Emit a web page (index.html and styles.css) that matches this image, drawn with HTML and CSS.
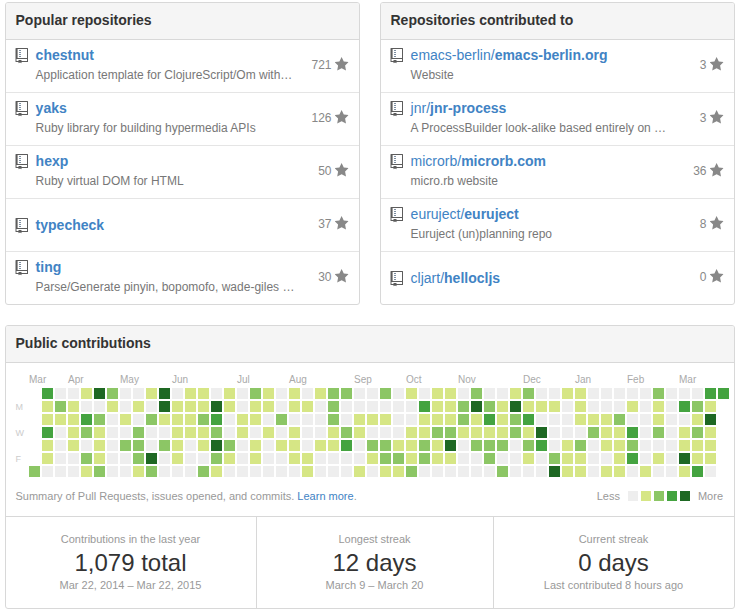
FILE: index.html
```html
<!DOCTYPE html>
<html lang="en">
<head>
<meta charset="utf-8">
<title>Contributions</title>
<link rel="stylesheet" href="styles.css">
</head>
<body>
<svg class="defs" width="0" height="0" aria-hidden="true">
  <symbol id="repo" viewBox="0 0 13 16">
    <path fill-rule="evenodd" d="M1 0h11.500q.5 0 .5.500v13q0 .5-.5.500H6.500v1.300L5 14.600 3.500 15.300V14H1q-.5 0-.5-.5V.5Q.5 0 1 0zM2.600 1v9H12V1zM1.500 11v2h2v-1h3v1H12v-2z"/>
    <path d="M4 2h2v1H4zM4 4h2v1H4zM4 6h2v1H4zM4 8h2v1H4z" class="ticks"/>
  </symbol>
  <symbol id="star" viewBox="0 0 14 14">
    <path d="M14 5.100l-4.800-.7L7 0 4.800 4.400 0 5.100l3.500 3.400L2.600 13.500 7 11.200l4.400 2.300-.9-5z"/>
  </symbol>
</svg>
<main class="page">
  <div class="columns">
    <section class="box">
      <h3 class="box-title">Popular repositories</h3>
      <ul class="repos">
        <li class="repo"><svg class="repo-icon"><use href="#repo"/></svg><div class="info"><a class="name"><b>chestnut</b></a><span class="desc">Application template for ClojureScript/Om with…</span></div><span class="stars">721 <svg class="star"><use href="#star"/></svg></span></li>
        <li class="repo"><svg class="repo-icon"><use href="#repo"/></svg><div class="info"><a class="name"><b>yaks</b></a><span class="desc">Ruby library for building hypermedia APIs</span></div><span class="stars">126 <svg class="star"><use href="#star"/></svg></span></li>
        <li class="repo"><svg class="repo-icon"><use href="#repo"/></svg><div class="info"><a class="name"><b>hexp</b></a><span class="desc">Ruby virtual DOM for HTML</span></div><span class="stars">50 <svg class="star"><use href="#star"/></svg></span></li>
        <li class="repo single"><svg class="repo-icon"><use href="#repo"/></svg><div class="info"><a class="name"><b>typecheck</b></a></div><span class="stars">37 <svg class="star"><use href="#star"/></svg></span></li>
        <li class="repo"><svg class="repo-icon"><use href="#repo"/></svg><div class="info"><a class="name"><b>ting</b></a><span class="desc">Parse/Generate pinyin, bopomofo, wade-giles …</span></div><span class="stars">30 <svg class="star"><use href="#star"/></svg></span></li>
      </ul>
    </section>
    <section class="box">
      <h3 class="box-title">Repositories contributed to</h3>
      <ul class="repos">
        <li class="repo"><svg class="repo-icon"><use href="#repo"/></svg><div class="info"><a class="name">emacs-berlin/<b>emacs-berlin.org</b></a><span class="desc">Website</span></div><span class="stars">3 <svg class="star"><use href="#star"/></svg></span></li>
        <li class="repo"><svg class="repo-icon"><use href="#repo"/></svg><div class="info"><a class="name">jnr/<b>jnr-process</b></a><span class="desc">A ProcessBuilder look-alike based entirely on …</span></div><span class="stars">3 <svg class="star"><use href="#star"/></svg></span></li>
        <li class="repo"><svg class="repo-icon"><use href="#repo"/></svg><div class="info"><a class="name">microrb/<b>microrb.com</b></a><span class="desc">micro.rb website</span></div><span class="stars">36 <svg class="star"><use href="#star"/></svg></span></li>
        <li class="repo"><svg class="repo-icon"><use href="#repo"/></svg><div class="info"><a class="name">euruject/<b>euruject</b></a><span class="desc">Euruject (un)planning repo</span></div><span class="stars">8 <svg class="star"><use href="#star"/></svg></span></li>
        <li class="repo single"><svg class="repo-icon"><use href="#repo"/></svg><div class="info"><a class="name">cljart/<b>hellocljs</b></a></div><span class="stars">0 <svg class="star"><use href="#star"/></svg></span></li>
      </ul>
    </section>
  </div>

  <section class="box">
    <h3 class="box-title">Public contributions</h3>
    <div class="calendar">
      <div class="months" id="months"></div>
      <div class="weekdays"><span>M</span><span>W</span><span>F</span></div>
      <div class="days" id="days"></div>
    </div>
    <div class="footer">
      <p class="summary">Summary of Pull Requests, issues opened, and commits. <a>Learn more</a>.</p>
      <div class="legend">
        <span>Less</span>
        <div class="swatches"><i class="l0"></i><i class="l1"></i><i class="l2"></i><i class="l3"></i><i class="l4"></i></div>
        <span>More</span>
      </div>
    </div>
    <div class="stats">
      <div class="stat"><span>Contributions in the last year</span><strong>1,079 total</strong><span>Mar 22, 2014 – Mar 22, 2015</span></div>
      <div class="stat"><span>Longest streak</span><strong>12 days</strong><span>March 9 – March 20</span></div>
      <div class="stat"><span>Current streak</span><strong>0 days</strong><span>Last contributed 8 hours ago</span></div>
    </div>
  </section>
</main>
<script src="script.js"></script>
</body>
</html>
```
FILE: styles.css
```css
* { box-sizing: border-box; }
body { margin: 0; background: #fff; color: #333; font-family: "Liberation Sans", Arial, sans-serif; font-size: 12px; }
h3, ul, p { margin: 0; padding: 0; }
.defs { display: block; }
.page { width: 730px; margin: 2px 0 0 5px; }
.columns { display: grid; grid-template-columns: 355px 355px; gap: 20px; margin-bottom: 20px; }
.box { border: 1px solid #d8d8d8; border-radius: 3px; overflow: hidden; }
.box-title { height: 37px; padding: 0 9.5px; border-bottom: 1px solid #d8d8d8; background: #f5f5f5; font-size: 14px; line-height: 35px; }

.repos { list-style: none; }
.repo { display: flex; height: 53px; padding: 5px 10px 0 9px; border-bottom: 1px solid #e5e5e5; }
.repo:last-child { height: 52px; border-bottom: 0; }
.repo.single .repo-icon { margin-top: 14px; }
.repo.single .name { margin-top: 11px; }
.repo-icon { width: 13px; height: 16px; margin: 3px 7.6px 0 0; fill: #5c5c5c; flex: none; }
.ticks { fill: #7d8ea0; }
.info { flex: 1; display: flex; flex-direction: column; }
.name { color: #4183c4; font-size: 14px; line-height: 20px; }
.desc { color: #777; line-height: 20px; white-space: nowrap; }
.stars { display: flex; gap: 3.5px; height: 20px; margin-top: 10px; color: #888; line-height: 20px; }
.star { width: 14px; height: 14px; margin-top: 2px; fill: #888; }
.star use { transform: translateX(-0.4px); }

.calendar { display: grid; grid-template-columns: 14px 1fr; grid-template-rows: 14px 89px; row-gap: 1px; padding: 10px 0 0 9px; }
.months { grid-column: 2; display: grid; grid-template-columns: repeat(54, 13px); color: #aaa; font-size: 10px; line-height: 14px; white-space: nowrap; }
.month { width: 0; grid-row: 1; }
.weekdays { display: grid; grid-auto-rows: 26px; padding: 13px 0 0 0.5px; color: #ccc; font-size: 9px; line-height: 13px; }
.days { display: grid; grid-template-columns: repeat(54, 11px); grid-template-rows: repeat(7, 11px); gap: 2px; }
.l0 { background: #eee; }
.l1 { background: #d6e685; }
.l2 { background: #8cc665; }
.l3 { background: #44a340; }
.l4 { background: #1e6823; }

.footer { display: flex; justify-content: space-between; height: 39px; padding: 9px 11px 0 9.5px; color: #999; font-size: 11px; line-height: 20px; }
.footer a { color: #4183c4; }
.legend { display: flex; }
.swatches { display: flex; gap: 3px; margin: 5px 8px 0; }
.swatches i { width: 10px; height: 10px; }

.stats { display: grid; grid-template-columns: 250px 237px 1fr; height: 92px; border-top: 1px solid #d8d8d8; }
.stat { display: flex; flex-direction: column; padding: 12px 1px 0 0; text-align: center; color: #999; font-size: 11px; line-height: 20px; }
.stat + .stat { border-left: 1px solid #d8d8d8; }
.stat strong { color: #333; font-size: 24px; font-weight: normal; line-height: 28px; }
.stat span:last-child { line-height: 16px; }
```
FILE: script.js
```js
// One string per weekday, one character per week; "." is outside the year shown.
const levels = [
  ".300142001401" + "10102101012200" + "20101102001200" + "1100000200033",
  ".121001010411" + "14101101102000" + "00031124214111" + "010001010321.",
  ".111320102111" + "23011020002011" + "10011121312300" + "011120010014.",
  ".301210020011" + "12010101001210" + "00112211112140" + "002113020121.",
  ".101010220210" + "14201011011302" + "21121402220230" + "120112000111.",
  ".100210024010" + "02101001100001" + "22121100200102" + "110013010411.",
  "2000120012000" + "21000000100010" + "11200000020004" + "110110100130."
];
const months = [["Mar", 0], ["Apr", 3], ["May", 7], ["Jun", 11], ["Jul", 16], ["Aug", 20], ["Sep", 25],
  ["Oct", 29], ["Nov", 33], ["Dec", 38], ["Jan", 42], ["Feb", 46], ["Mar", 50]];

const days = document.getElementById("days");
levels.forEach(row => {
  for (const level of row) {
    const cell = document.createElement("i");
    if (level !== ".") cell.className = "l" + level;
    days.appendChild(cell);
  }
});

const monthRow = document.getElementById("months");
months.forEach(([label, week]) => {
  const el = document.createElement("span");
  el.className = "month";
  el.textContent = label;
  el.style.gridColumn = week + 1;
  monthRow.appendChild(el);
});
```
